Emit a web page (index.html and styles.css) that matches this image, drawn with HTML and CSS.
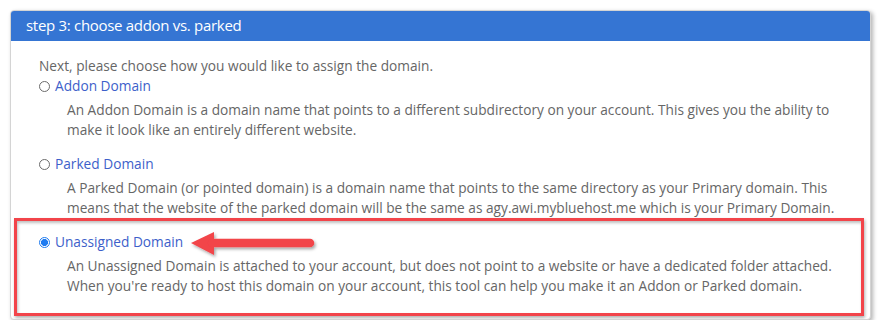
FILE: index.html
```html
<!DOCTYPE html>
<html>
<head>
<meta charset="utf-8">
<link rel="stylesheet" href="styles.css">
</head>
<body>
<div class="panel">
  <div class="panel-header">step 3: choose addon vs. parked</div>
  <div class="panel-body">
    <div class="intro">Next, please choose how you would like to assign the domain.</div>
    <div class="option">
      <div class="opt-label"><span class="radio"></span><span class="label-text">Addon Domain</span></div>
      <div class="opt-desc">An Addon Domain is a domain name that points to a different subdirectory on your account. This gives you the ability to make it look like an entirely different website.</div>
    </div>
    <div class="option">
      <div class="opt-label"><span class="radio"></span><span class="label-text">Parked Domain</span></div>
      <div class="opt-desc">A Parked Domain (or pointed domain) is a domain name that points to the same directory as your Primary domain. This means that the website of the parked domain will be the same as agy.awi.mybluehost.me which is your Primary Domain.</div>
    </div>
    <div class="option highlighted">
      <div class="opt-label"><span class="radio checked"></span><span class="label-text">Unassigned Domain</span></div>
      <div class="opt-desc">An Unassigned Domain is attached to your account, but does not point to a website or have a dedicated folder attached. When you're ready to host this domain on your account, this tool can help you make it an Addon or Parked domain.</div>
      <svg class="arrow" width="136" height="34" viewBox="0 0 136 34">
        <defs>
          <filter id="sh" x="-10%" y="-30%" width="130%" height="180%">
            <feDropShadow dx="1.5" dy="2" stdDeviation="1.5" flood-color="#000" flood-opacity="0.35"/>
          </filter>
        </defs>
        <g filter="url(#sh)">
          <polygon points="3,13 26,2 26,25" fill="#f2444a"/>
          <line x1="24" y1="13" x2="122" y2="13" stroke="#f2444a" stroke-width="8.5" stroke-linecap="round"/>
        </g>
      </svg>
    </div>
  </div>
</div>
</body>
</html>
```

FILE: styles.css
```css
html, body {
  margin: 0;
  padding: 0;
  background: #ffffff;
}

body {
  font-family: "Open Sans", "Noto Sans", "Liberation Sans", sans-serif;
  color: #666666;
}

.panel {
  margin: 10px 0 0 10px;
  width: 859px;
  height: 308px;
  border: 1px solid #d4d4d4;
  border-radius: 4px;
  box-shadow: 2px 2px 4px rgba(0, 0, 0, 0.3);
  overflow: hidden;
  background: #fff;
}

.panel-header {
  background: #3575d3;
  color: #ffffff;
  height: 30px;
  line-height: 29px;
  font-size: 15px;
  letter-spacing: -0.3px;
  padding-left: 15px;
}

.panel-body {
  padding: 15px 20px 0 28px;
  font-size: 13.7px;
  line-height: 20px;
}

.option {
  margin-bottom: 14px;
}

.opt-label {
  display: flex;
  align-items: center;
  height: 20px;
}

.radio {
  width: 9px;
  height: 9px;
  border: 1px solid #6b6b6b;
  border-radius: 50%;
  margin-right: 5px;
  flex: none;
  box-sizing: content-box;
  position: relative;
  top: 0.5px;
}

.radio.checked {
  border-color: #1e7bf0;
  background: radial-gradient(circle, #1e7bf0 0, #1e7bf0 3.2px, #ffffff 3.8px);
}

.label-text {
  color: #3d5fca;
}

.opt-desc {
  margin-top: 4px;
  padding-left: 28px;
}

.highlighted {
  position: relative;
  margin: -14px -14px 0 -25px;
  padding: 11px 11px 17px 22px;
  border: 3px solid #f2444a;
  box-shadow: 1px 2px 3px rgba(0, 0, 0, 0.3), inset 1px 2px 3px rgba(0, 0, 0, 0.25);
}

.arrow {
  position: absolute;
  left: 171px;
  top: 9px;
}
```
